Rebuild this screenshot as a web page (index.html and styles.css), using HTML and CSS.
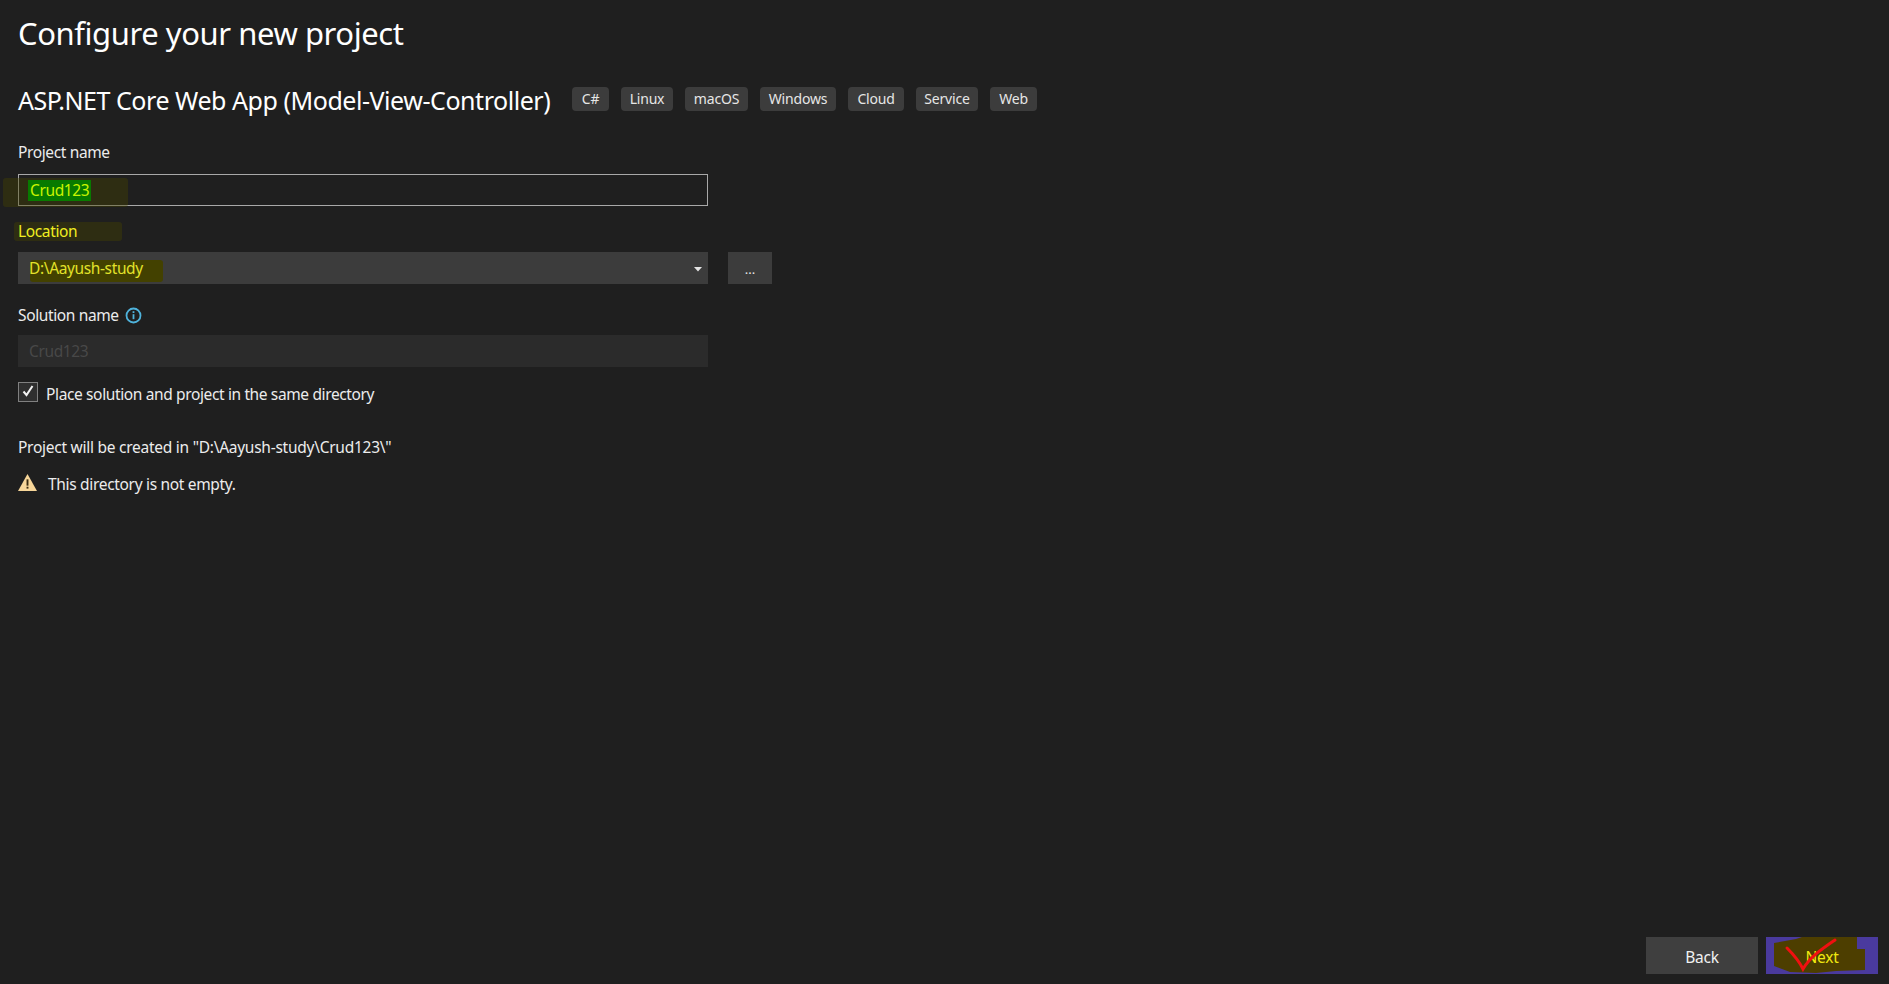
FILE: index.html
```html
<!DOCTYPE html>
<html lang="en">
<head>
<meta charset="utf-8">
<title>Configure your new project</title>
<link rel="stylesheet" href="styles.css">
</head>
<body>
<main class="page">
  <h1 class="title">Configure your new project</h1>
  <div class="template">
    <h2 class="template-name">ASP.NET Core Web App (Model-View-Controller)</h2>
    <ul class="tags">
      <li class="tag tag-cs">C#</li>
      <li class="tag tag-linux">Linux</li>
      <li class="tag tag-mac">macOS</li>
      <li class="tag tag-win">Windows</li>
      <li class="tag tag-cloud">Cloud</li>
      <li class="tag tag-service">Service</li>
      <li class="tag tag-web">Web</li>
    </ul>
  </div>

  <div class="label label-project">Project name</div>
  <div class="input">
    <span class="mark mark-name"></span>
    <span class="selected">Crud123</span>
  </div>

  <div class="label label-location"><span class="mark mark-loc"></span><span class="hl-text">Location</span></div>
  <div class="location-row">
    <div class="select">
      <span class="mark mark-path"></span>
      <span class="hl-text path">D:\Aayush-study</span>
      <svg class="caret" width="8" height="5" viewBox="0 0 8 5"><path d="M0 0h8L4 4.5z" fill="#e4e4e4"/></svg>
    </div>
    <div class="browse">...</div>
  </div>

  <div class="label label-solution">Solution name
    <svg class="info" width="17" height="17" viewBox="0 0 17 17"><circle cx="8.5" cy="8.5" r="7" fill="none" stroke="#4fb3dc" stroke-width="1.8"/><rect x="7.6" y="7.2" width="1.8" height="5" fill="#4fb3dc"/><rect x="7.6" y="4.2" width="1.8" height="1.8" fill="#4fb3dc"/></svg>
  </div>
  <div class="input-disabled">Crud123</div>

  <div class="check-row">
    <span class="checkbox"><svg class="check" width="12" height="12" viewBox="0 0 12 12"><path d="M1.5 6.5L4.5 10L10.5 1" fill="none" stroke="#f2f2f2" stroke-width="2"/></svg></span>
    <span class="check-text">Place solution and project in the same directory</span>
  </div>

  <p class="created">Project will be created in "D:\Aayush-study\Crud123\"</p>
  <div class="warning">
    <svg class="warn-icon" width="19" height="17" viewBox="0 0 18 16"><path d="M9 0L18 16H0z" fill="#f7d699"/><rect x="8.1" y="5" width="1.8" height="6" fill="#3a2c10"/><rect x="8.1" y="12" width="1.8" height="1.8" fill="#3a2c10"/></svg>
    <span class="warn-text">This directory is not empty.</span>
  </div>

  <footer class="actions">
    <div class="btn">Back</div>
    <div class="btn btn-next">
      <svg class="scribble" width="112" height="37" viewBox="0 0 112 37"><path d="M8 6L30 2L36 0L91 0L91 12L99 12L99 33L70 34L50 36L24 35L8 29z" fill="#4d3e00"/></svg>
      <span class="next-text">Next</span>
      <svg class="tick" width="56" height="37" viewBox="0 0 56 37"><path d="M3 11C9 17 15 24 19 32C26 20 38 12 51 3" fill="none" stroke="#f01010" stroke-width="3" stroke-linecap="round"/></svg>
    </div>
  </footer>
</main>
</body>
</html>
```
FILE: styles.css
```css
* { box-sizing: border-box; }
html, body { margin: 0; height: 100%; }
body {
  background: #1f1f1f;
  color: #f1f1f1;
  font-family: "Noto Sans", "Open Sans", sans-serif;
  font-size: 15.5px;
  overflow: hidden;
}
.page {
  height: 984px;
  padding: 0 11px 10px 18px;
  display: flex;
  flex-direction: column;
}
.title {
  margin: 12px 0 0;
  font-size: 31px;
  line-height: 42px;
  font-weight: 400;
  color: #fff;
  letter-spacing: -0.43px;
}
.template {
  margin-top: 33px;
  height: 24px;
  display: flex;
  align-items: center;
}
.template-name {
  margin: 0;
  font-size: 25px;
  line-height: 34px;
  font-weight: 400;
  color: #fff;
  letter-spacing: -0.45px;
  width: 554px;
  white-space: nowrap;
  position: relative;
  top: 1px;
}
.tags {
  list-style: none;
  margin: 0;
  padding: 0;
  display: flex;
  gap: 12px;
}
.tag {
  height: 24px;
  background: #3c3c3c;
  border-radius: 4px;
  font-size: 14px;
  line-height: 24px;
  text-align: center;
  color: #e6e6e6;
  letter-spacing: -0.2px;
}
.tag-cs { width: 37px; }
.tag-linux { width: 52px; }
.tag-mac { width: 63px; }
.tag-win { width: 76px; }
.tag-cloud { width: 56px; }
.tag-service { width: 62px; }
.tag-web { width: 47px; }
.label {
  line-height: 20px;
  color: #ececec;
  letter-spacing: -0.37px;
  display: flex;
  align-items: center;
  position: relative;
}
.label-project { margin-top: 31px; }
.label-location { margin-top: 15px; color: #f0ee20; }
.label-solution { margin-top: 21px; gap: 6px; }
.input {
  margin-top: 12px;
  width: 690px;
  height: 32px;
  border: 1px solid #a8a8a8;
  padding-left: 9px;
  display: flex;
  align-items: center;
  position: relative;
}
.selected {
  position: relative;
  background: #087a00;
  color: #c9f400;
  line-height: 21px;
  letter-spacing: -0.37px;
  padding: 0 2px;
}
.mark {
  position: absolute;
  background: rgba(70, 68, 0, 0.4);
  border-radius: 3px;
}
.mark-name { left: -16px; top: 3px; width: 125px; height: 29px; }
.mark-loc { left: -4px; top: 1px; width: 108px; height: 19px; }
.mark-path { left: 12px; top: 8px; width: 133px; height: 22px; background: #434100; }
.hl-text { position: relative; }
.location-row {
  margin-top: 11px;
  display: flex;
  gap: 20px;
}
.select {
  width: 690px;
  height: 32px;
  background: #3c3c3c;
  padding-left: 11px;
  display: flex;
  align-items: center;
  position: relative;
}
.path {
  color: #e2e22a;
  letter-spacing: -0.37px;
}
.caret { position: absolute; right: 6px; top: 15px; }
.browse {
  width: 44px;
  height: 32px;
  background: #3c3c3c;
  text-align: center;
  font-size: 13px;
  line-height: 34px;
  color: #e6e6e6;
}
.input-disabled {
  margin-top: 10px;
  width: 690px;
  height: 32px;
  background: #2b2b2b;
  padding-left: 11px;
  line-height: 32px;
  letter-spacing: -0.37px;
  color: #484848;
}
.check-row {
  margin-top: 15px;
  height: 20px;
  display: flex;
  align-items: center;
  gap: 8px;
  letter-spacing: -0.37px;
  line-height: 20px;
  color: #ececec;
}
.check-text { padding-top: 4px; }
.checkbox {
  width: 20px;
  height: 20px;
  border: 1px solid #808080;
  background: #2f2f2f;
  display: flex;
  align-items: center;
  justify-content: center;
}
.check { margin-bottom: 3px; }
.created {
  margin: 35px 0 0;
  line-height: 20px;
  letter-spacing: -0.26px;
  color: #ececec;
}
.warning {
  margin-top: 16px;
  height: 20px;
  display: flex;
  align-items: center;
  gap: 11px;
  letter-spacing: -0.32px;
  color: #ececec;
}
.warn-icon { margin-bottom: 2px; }
.warn-text { padding-top: 2px; }
.actions {
  margin-top: auto;
  display: flex;
  justify-content: flex-end;
  gap: 8px;
}
.btn {
  width: 112px;
  height: 37px;
  background: #3f3f3f;
  text-align: center;
  line-height: 41px;
  font-size: 15.5px;
  color: #f1f1f1;
  letter-spacing: -0.2px;
  position: relative;
}
.btn-next { background: #4a3a9e; overflow: hidden; }
.scribble { position: absolute; left: 0; top: 0; }
.next-text { position: relative; color: #f0e810; }
.tick { position: absolute; left: 18px; top: 0; }
```
